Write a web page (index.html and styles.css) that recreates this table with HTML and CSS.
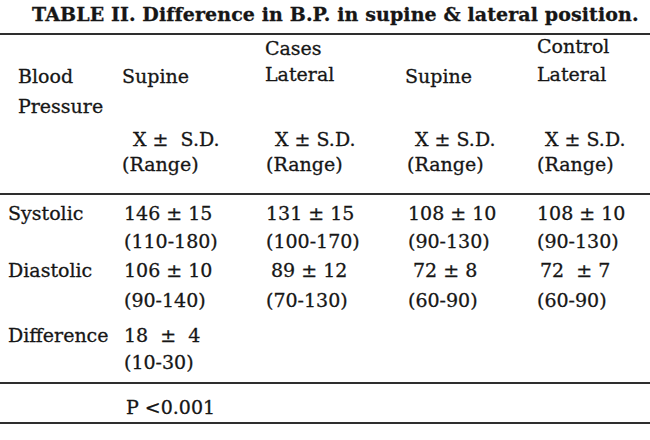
FILE: index.html
```html
<!DOCTYPE html>
<html>
<head>
<meta charset="utf-8">
<link rel="stylesheet" href="styles.css">
</head>
<body>
<div class="page">
  <div class="title">TABLE II. Difference in B.P. in supine &amp; lateral position.</div>

  <div class="head grid">
    <div class="c0 h1"></div>
    <div class="c1 h1"></div>
    <div class="c2 h1">Cases</div>
    <div class="c3 h1"></div>
    <div class="c4 h1 up">Control</div>

    <div class="c0 h2 lab">Blood</div>
    <div class="c1 h2">Supine</div>
    <div class="c2 h2 up">Lateral</div>
    <div class="c3 h2">Supine</div>
    <div class="c4 h2 up">Lateral</div>

    <div class="c0 h3 lab">Pressure</div>
    <div class="c1 h3"></div>
    <div class="c2 h3"></div>
    <div class="c3 h3"></div>
    <div class="c4 h3"></div>

    <div class="c0 h4"></div>
    <div class="c1 h4 sd1">X ± &nbsp;S.D.</div>
    <div class="c2 h4 sd2">X ± S.D.</div>
    <div class="c3 h4 sd3">X ± S.D.</div>
    <div class="c4 h4 sd4">X ± S.D.</div>

    <div class="c0 h5"></div>
    <div class="c1 h5">(Range)</div>
    <div class="c2 h5 r2">(Range)</div>
    <div class="c3 h5 r3">(Range)</div>
    <div class="c4 h5">(Range)</div>
  </div>

  <div class="body grid">
    <div class="c0 b1">Systolic</div>
    <div class="c1 b1 v1">146 ± 15</div>
    <div class="c2 b1 v2">131 ± 15</div>
    <div class="c3 b1 v3">108 ± 10</div>
    <div class="c4 b1">108 ± 10</div>

    <div class="c0 b2"></div>
    <div class="c1 b2">(110-180)</div>
    <div class="c2 b2 v2">(100-170)</div>
    <div class="c3 b2 v3">(90-130)</div>
    <div class="c4 b2">(90-130)</div>

    <div class="c0 b3">Diastolic</div>
    <div class="c1 b3 v1">106 ± 10</div>
    <div class="c2 b3 in5">89 ± 12</div>
    <div class="c3 b3 in6">72 ± 8</div>
    <div class="c4 b3 in3">72 &nbsp;± 7</div>

    <div class="c0 b4"></div>
    <div class="c1 b4">(90-140)</div>
    <div class="c2 b4 v2">(70-130)</div>
    <div class="c3 b4 v3">(60-90)</div>
    <div class="c4 b4">(60-90)</div>

    <div class="c0 b5">Difference</div>
    <div class="c1 b5 v1">18 &nbsp;± &nbsp;4</div>
    <div class="c2 b5"></div>
    <div class="c3 b5"></div>
    <div class="c4 b5"></div>

    <div class="c0 b6"></div>
    <div class="c1 b6">(10-30)</div>
    <div class="c2 b6"></div>
    <div class="c3 b6"></div>
    <div class="c4 b6"></div>
  </div>

  <div class="foot grid">
    <div class="c0"></div>
    <div class="c1 pval">P &lt;0.001</div>
  </div>
</div>
</body>
</html>
```

FILE: styles.css
```css
html, body {
  margin: 0;
  padding: 0;
  background: #ffffff;
}

.page {
  width: 650px;
  height: 440px;
  font-family: "DejaVu Serif", "Liberation Serif", serif;
  font-size: 19px;
  color: #161616;
  -webkit-text-stroke: 0.3px #161616;
  overflow: hidden;
}

.title {
  height: 33px;
  line-height: 29px;
  padding-left: 32px;
  font-weight: bold;
  font-size: 19px;
  letter-spacing: 0.1px;
  white-space: nowrap;
  border-bottom: 2px solid #2e2e2e;
}

.grid {
  display: grid;
  grid-template-columns: 122px 143px 140px 132px 113px;
  white-space: nowrap;
}

.head {
  border-bottom: 2px solid #2e2e2e;
  padding-bottom: 22px;
}

.h1 { height: 26px; line-height: 26px; }
.h2 { height: 30px; line-height: 30px; }
.h3 { height: 30px; line-height: 30px; }
.h4 { height: 36px; line-height: 36px; }
.h5 { height: 14px; line-height: 14px; }

.up { position: relative; top: -2px; }

.lab { padding-left: 18px; }

.sd1 { padding-left: 11px; }
.sd2 { padding-left: 10px; }
.sd3 { padding-left: 10px; }
.sd4 { padding-left: 8px; }
.r2 { padding-left: 1px; }
.r3 { padding-left: 2px; }

.body {
  padding-top: 4px;
  padding-bottom: 13px;
  border-bottom: 2px solid #2e2e2e;
}

.body .c0 { padding-left: 8px; }
.body .c1 { padding-left: 2px; }
.v2 { padding-left: 1px; }
.v3 { padding-left: 3px; }
.in5 { padding-left: 6px; }
.in6 { padding-left: 8px; }
.in3 { padding-left: 3px; }

.b1 { height: 28px; line-height: 28px; }
.b2 { height: 28px; line-height: 28px; }
.b3 { height: 30px; line-height: 30px; }
.b4 { height: 30px; line-height: 30px; }
.b5 { height: 40px; line-height: 40px; }
.b6 { height: 14px; line-height: 14px; }

.foot {
  padding-top: 8px;
  height: 30px;
  line-height: 30px;
  border-bottom: 2px solid #2e2e2e;
}

.pval { padding-left: 4px; }
```
